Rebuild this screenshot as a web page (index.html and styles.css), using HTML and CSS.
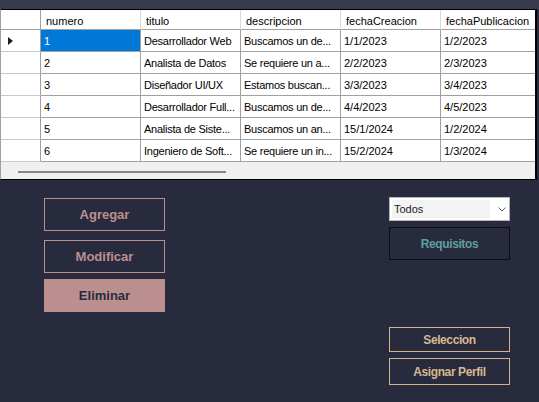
FILE: index.html
```html
<!DOCTYPE html>
<html lang="es">
<head>
<meta charset="utf-8">
<title>Ofertas</title>
<link rel="stylesheet" href="styles.css">
</head>
<body>
<div class="app">
  <div class="topbar"></div>
  <div class="grid-frame">
    <div class="grid">
      <div class="hcell corner"></div>
      <div class="hcell">numero</div>
      <div class="hcell">titulo</div>
      <div class="hcell">descripcion</div>
      <div class="hcell">fechaCreacion</div>
      <div class="hcell last">fechaPublicacion</div>

      <div class="rhead"><span class="current"></span></div>
      <div class="cell selected">1</div>
      <div class="cell txt">Desarrollador Web</div>
      <div class="cell txt">Buscamos un de...</div>
      <div class="cell">1/1/2023</div>
      <div class="cell last">1/2/2023</div>

      <div class="rhead"></div>
      <div class="cell">2</div>
      <div class="cell txt">Analista de Datos</div>
      <div class="cell txt">Se requiere un a...</div>
      <div class="cell">2/2/2023</div>
      <div class="cell last">2/3/2023</div>

      <div class="rhead"></div>
      <div class="cell">3</div>
      <div class="cell txt">Diseñador UI/UX</div>
      <div class="cell txt">Estamos buscan...</div>
      <div class="cell">3/3/2023</div>
      <div class="cell last">3/4/2023</div>

      <div class="rhead"></div>
      <div class="cell">4</div>
      <div class="cell txt">Desarrollador Full...</div>
      <div class="cell txt">Buscamos un de...</div>
      <div class="cell">4/4/2023</div>
      <div class="cell last">4/5/2023</div>

      <div class="rhead"></div>
      <div class="cell">5</div>
      <div class="cell txt">Analista de Siste...</div>
      <div class="cell txt">Buscamos un an...</div>
      <div class="cell">15/1/2024</div>
      <div class="cell last">1/2/2024</div>

      <div class="rhead"></div>
      <div class="cell">6</div>
      <div class="cell txt">Ingeniero de Soft...</div>
      <div class="cell txt">Se requiere un in...</div>
      <div class="cell">15/2/2024</div>
      <div class="cell last">1/3/2024</div>
    </div>
    <div class="hscroll"><div class="thumb"></div></div>
  </div>

  <div class="panel">
    <div class="left-col">
      <button class="btn rose">Agregar</button>
      <button class="btn rose mod">Modificar</button>
      <button class="btn rose-fill">Eliminar</button>
    </div>
    <div class="right-col">
      <div class="combo">
        <span class="combo-value">Todos</span>
        <svg class="chev" width="8" height="5" viewBox="0 0 8 5"><polyline points="0.5,0.5 4,4 7.5,0.5" fill="none" stroke="#606060" stroke-width="1"/></svg>
      </div>
      <button class="btn small cadet">Requisitos</button>
      <button class="btn small tan sel">Seleccion</button>
      <button class="btn small tan asig">Asignar Perfil</button>
    </div>
  </div>
</div>
</body>
</html>
```
FILE: styles.css
```css
* { box-sizing: border-box; }
html, body {
  margin: 0;
  padding: 0;
  background: #282b3e;
}
.app {
  width: 539px;
  height: 402px;
  overflow: hidden;
  background: #282b3e;
  font-family: "Liberation Sans", Arial, sans-serif;
}
.topbar {
  height: 9px;
  background: #373a4d;
}
.grid-frame {
  width: 537px;
  border-top: 1px solid #000;
  border-left: 1px solid #a0a0a0;
  border-right: 2px solid #000;
  border-bottom: 1px solid #000;
  background: #fff;
}
.grid {
  display: grid;
  grid-template-columns: 40px 100px 100px 100px 100px 1fr;
  grid-auto-rows: 22px;
  grid-template-rows: 20px;
  font-size: 11px;
  color: #000;
}
.hcell {
  background: #fff;
  border-right: 1px solid #d9d9d9;
  border-bottom: 1px solid #a0a0a0;
  padding: 3px 0 0 5px;
  display: flex;
  align-items: center;
  white-space: nowrap;
  overflow: hidden;
}
.hcell.corner { border-right-color: #a0a0a0; }
.rhead {
  background: #fff;
  border-right: 1px solid #a0a0a0;
  border-bottom: 1px solid #c8c8c8;
  display: flex;
  align-items: center;
  padding-left: 7px;
}
.current {
  width: 0;
  height: 0;
  border-top: 4px solid transparent;
  border-bottom: 4px solid transparent;
  border-left: 5px solid #1e1e1e;
}
.cell {
  border-right: 1px solid #a0a0a0;
  border-bottom: 1px solid #a0a0a0;
  padding: 1px 0 0 3px;
  display: flex;
  align-items: center;
  white-space: nowrap;
  overflow: hidden;
}
.cell.txt { letter-spacing: -0.25px; }
.hcell.last, .cell.last { border-right: none; }
.cell.selected {
  background: #0078d7;
  color: #fff;
}
.hscroll {
  height: 17px;
  background: #f0f0f0;
  padding: 9px 0 0 17px;
}
.thumb {
  width: 208px;
  height: 2px;
  background: #858585;
}
.panel {
  display: flex;
  align-items: flex-start;
}
.left-col {
  margin-left: 44px;
  padding-top: 18px;
  width: 121px;
  display: flex;
  flex-direction: column;
}
.right-col {
  margin-left: 224px;
  padding-top: 17px;
  width: 121px;
  display: flex;
  flex-direction: column;
}
.btn {
  display: block;
  width: 121px;
  height: 33px;
  padding: 0;
  margin: 0;
  background: transparent;
  font-family: "Liberation Sans", Arial, sans-serif;
  font-weight: bold;
  font-size: 13px;
  text-align: center;
}
.rose {
  border: 1px solid #bc8f8f;
  color: #bc8f8f;
}
.mod { margin-top: 9px; }
.rose-fill {
  margin-top: 6px;
  border: 1px solid #bc8f8f;
  background: #bc8f8f;
  color: #282b3e;
}
.combo {
  width: 121px;
  height: 24px;
  background: #fff;
  border: 1px solid #b4b4b4;
  display: flex;
  align-items: center;
  padding: 2px;
}
.combo-value {
  width: 98px;
  height: 18px;
  background: #f3f3f3;
  font-size: 11px;
  color: #222;
  line-height: 18px;
  padding-left: 2px;
}
.chev { margin-left: 8px; }
.btn.small {
  font-size: 12px;
  letter-spacing: -0.4px;
}
.cadet {
  margin-top: 6px;
  border: 1px solid #0c0d14;
  color: #5f9ea0;
}
.tan {
  border: 1px solid #d2b48c;
  color: #d8b88f;
}
.sel {
  margin-top: 67px;
  height: 25px;
}
.asig {
  margin-top: 6px;
  height: 27px;
}
```
